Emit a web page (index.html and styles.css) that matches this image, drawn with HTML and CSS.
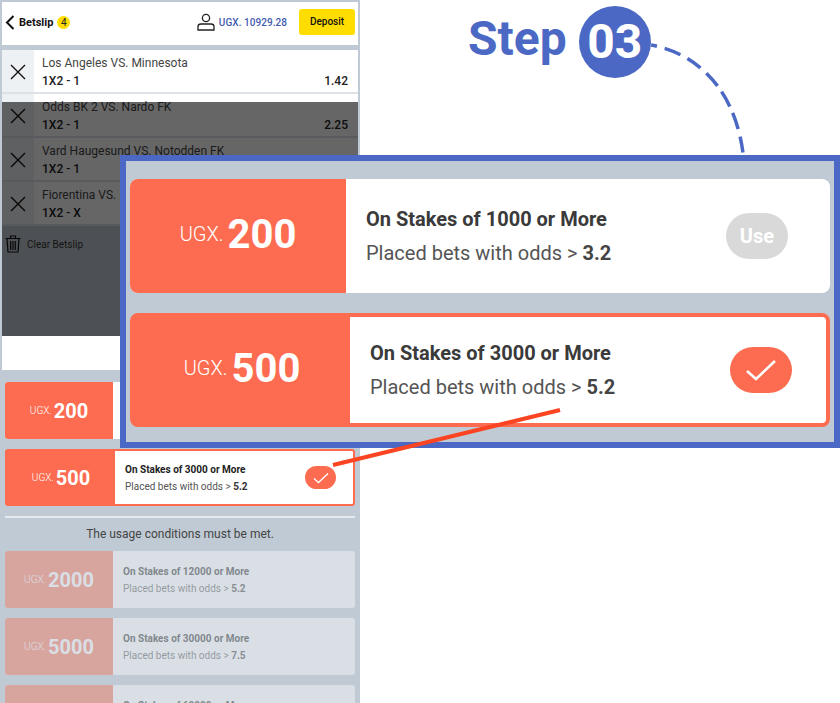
FILE: index.html
```html
<!DOCTYPE html>
<html lang="en">
<head>
  <meta charset="UTF-8">
  <title>Step 03 - Betslip coupons</title>
  <link rel="stylesheet" href="styles.css">
</head>
<body>
  <div class="stage">

    <div class="phone">
      <div class="topbar">
        <svg class="back" width="10" height="15" viewBox="0 0 10 15"><path d="M8.5 1 L2 7.5 L8.5 14" fill="none" stroke="#111" stroke-width="2"/></svg>
        <span class="topbar-title">Betslip</span>
        <span class="count">4</span>
        <svg class="user" width="18" height="18" viewBox="0 0 18 18"><circle cx="9" cy="5" r="3.6" fill="none" stroke="#222" stroke-width="1.3"/><path d="M1 17 V13.5 Q1 11 4 11 H14 Q17 11 17 13.5 V17 Z" fill="none" stroke="#222" stroke-width="1.3"/></svg>
        <span class="balance">UGX. 10929.28</span>
        <span class="deposit">Deposit</span>
      </div>

      <div class="slip">
        <div class="bet">
          <div class="bet-del"><svg width="16" height="16" viewBox="0 0 16 16"><path d="M1 1 L15 15 M15 1 L1 15" stroke="#111" stroke-width="1.4"/></svg></div>
          <div class="bet-info">
            <div class="bet-match">Los Angeles VS. Minnesota</div>
            <div class="bet-pick"><span>1X2 - 1</span><span>1.42</span></div>
          </div>
        </div>
        <div class="bet">
          <div class="bet-del"><svg width="16" height="16" viewBox="0 0 16 16"><path d="M1 1 L15 15 M15 1 L1 15" stroke="#111" stroke-width="1.4"/></svg></div>
          <div class="bet-info">
            <div class="bet-match">Odds BK 2 VS. Nardo FK</div>
            <div class="bet-pick"><span>1X2 - 1</span><span>2.25</span></div>
          </div>
        </div>
        <div class="bet">
          <div class="bet-del"><svg width="16" height="16" viewBox="0 0 16 16"><path d="M1 1 L15 15 M15 1 L1 15" stroke="#111" stroke-width="1.4"/></svg></div>
          <div class="bet-info">
            <div class="bet-match">Vard Haugesund VS. Notodden FK</div>
            <div class="bet-pick"><span>1X2 - 1</span><span>1.42</span></div>
          </div>
        </div>
        <div class="bet">
          <div class="bet-del"><svg width="16" height="16" viewBox="0 0 16 16"><path d="M1 1 L15 15 M15 1 L1 15" stroke="#111" stroke-width="1.4"/></svg></div>
          <div class="bet-info">
            <div class="bet-match">Fiorentina VS. Inter</div>
            <div class="bet-pick"><span>1X2 - X</span><span>1.42</span></div>
          </div>
        </div>
        <div class="clear">
          <svg width="16" height="18" viewBox="0 0 16 18"><path d="M0.5 3.5 H15.5 M5.5 3.5 V1 H10.5 V3.5 M2 3.5 L3 17 H13 L14 3.5 M5.7 6 V15 M8 6 V15 M10.3 6 V15" fill="none" stroke="#111" stroke-width="1.2"/></svg>
          <span>Clear Betslip</span>
        </div>
        <div class="dim"></div>
      </div>
      <div class="slip-foot"></div>

      <div class="coupons">
        <div class="coupon">
          <div class="coupon-value"><span class="cur">UGX.</span> <b>200</b></div>
          <div class="coupon-body"></div>
        </div>
        <div class="coupon coupon-picked">
          <div class="coupon-value"><span class="cur">UGX.</span> <b>500</b></div>
          <div class="coupon-body">
            <div class="coupon-text">
              <div class="coupon-title">On Stakes of 3000 or More</div>
              <div class="coupon-sub">Placed bets with odds &gt; <b>5.2</b></div>
            </div>
            <span class="tick"><svg width="16" height="12" viewBox="0 0 32 24"><path d="M2 13 L11 21 L30 3" fill="none" stroke="#fff" stroke-width="2.6"/></svg></span>
          </div>
        </div>
        <div class="rule"></div>
        <div class="notice">The usage conditions must be met.</div>
        <div class="coupon coupon-off">
          <div class="coupon-value"><span class="cur">UGX.</span> <b>2000</b></div>
          <div class="coupon-body">
            <div class="coupon-text">
              <div class="coupon-title">On Stakes of 12000 or More</div>
              <div class="coupon-sub">Placed bets with odds &gt; <b>5.2</b></div>
            </div>
          </div>
        </div>
        <div class="coupon coupon-off">
          <div class="coupon-value"><span class="cur">UGX.</span> <b>5000</b></div>
          <div class="coupon-body">
            <div class="coupon-text">
              <div class="coupon-title">On Stakes of 30000 or More</div>
              <div class="coupon-sub">Placed bets with odds &gt; <b>7.5</b></div>
            </div>
          </div>
        </div>
        <div class="coupon coupon-off">
          <div class="coupon-value"><span class="cur">UGX.</span> <b>10000</b></div>
          <div class="coupon-body">
            <div class="coupon-text">
              <div class="coupon-title">On Stakes of 60000 or More</div>
              <div class="coupon-sub">Placed bets with odds &gt; <b>7.5</b></div>
            </div>
          </div>
        </div>
      </div>
    </div>

    <!-- Callout: enlarged copy of the coupons -->
    <div class="callout">
      <div class="coupon">
        <div class="coupon-value"><span class="cur">UGX.</span> <b>200</b></div>
        <div class="coupon-body">
          <div class="coupon-text">
            <div class="coupon-title">On Stakes of 1000 or More</div>
            <div class="coupon-sub">Placed bets with odds &gt; <b>3.2</b></div>
          </div>
          <span class="use">Use</span>
        </div>
      </div>
      <div class="coupon coupon-picked">
        <div class="coupon-value"><span class="cur">UGX.</span> <b>500</b></div>
        <div class="coupon-body">
          <div class="coupon-text">
            <div class="coupon-title">On Stakes of 3000 or More</div>
            <div class="coupon-sub">Placed bets with odds &gt; <b>5.2</b></div>
          </div>
          <span class="tick"><svg width="32" height="24" viewBox="0 0 32 24"><path d="M2 13 L11 21 L30 3" fill="none" stroke="#fff" stroke-width="2.6"/></svg></span>
        </div>
      </div>
    </div>

    <div class="step">
      <span class="step-word">Step</span>
      <span class="step-num">03</span>
    </div>

    <!-- Dashed curve and red pointer -->
    <svg class="marks" width="840" height="703" viewBox="0 0 840 703">
      <path d="M651 45 C 700 54, 735 92, 743 153" fill="none" stroke="#4b69c4" stroke-width="3.5" stroke-dasharray="6 8 17 8 16 8 17 7 17 7 17 8 16 9"/>
      <path d="M333 465 L560 410" fill="none" stroke="#fb4422" stroke-width="4"/>
    </svg>

  </div>
</body>
</html>
```

FILE: styles.css
```css
body {
  margin: 0;
  background: #fff;
  font-family: Roboto, Arial, sans-serif;
  color: #333;
}

.stage {
  position: relative;
  width: 840px;
  height: 703px;
  overflow: hidden;
}

/* Phone */
.phone {
  box-sizing: border-box;
  width: 360px;
  height: 703px;
  padding: 2px 2px 0;
  background: #c0cad4;
  overflow: hidden;
}

.topbar {
  display: flex;
  align-items: center;
  height: 43px;
  margin-bottom: 5px;
  padding: 0 3px 3px 3px;
  box-sizing: border-box;
  background: #fff;
}

.back {
  margin-right: 4px;
}

.topbar-title {
  font-size: 11px;
  font-weight: 700;
  color: #111;
}

.count {
  width: 13px;
  height: 13px;
  margin-left: 4px;
  border-radius: 50%;
  background: #ffdd00;
  font-size: 10px;
  line-height: 13px;
  text-align: center;
  color: #222;
}

.user {
  margin-left: auto;
  margin-right: 4px;
}

.balance {
  font-size: 10px;
  font-weight: 500;
  letter-spacing: 0.05px;
  color: #3f5bb0;
}

.deposit {
  width: 56px;
  height: 26px;
  margin-left: 12px;
  border-radius: 3px;
  background: #ffdd00;
  font-size: 10px;
  font-weight: 500;
  line-height: 26px;
  text-align: center;
  color: #111;
}

.slip {
  position: relative;
  height: 286px;
}

.bet {
  display: flex;
  box-sizing: border-box;
  height: 44px;
  border-bottom: 2px solid #dde2e8;
  background: #fff;
}

.bet-del {
  display: flex;
  align-items: center;
  justify-content: center;
  box-sizing: border-box;
  width: 32px;
  padding-top: 2px;
  background: #eef1f4;
}

.bet-info {
  flex: 1;
  padding: 5px 10px 0 8px;
}

.bet-match {
  font-size: 12px;
  line-height: 17px;
  color: #444;
}

.bet-pick {
  display: flex;
  justify-content: space-between;
  margin-top: 1px;
  font-size: 12px;
  font-weight: 500;
  line-height: 17px;
  color: #222;
}

.clear {
  display: flex;
  align-items: center;
  gap: 6px;
  padding: 9px 0 0 3px;
  font-size: 10px;
  color: #333;
}

.dim {
  position: absolute;
  top: 52px;
  left: 0;
  right: 0;
  bottom: 0;
  background: rgba(0, 0, 0, 0.6);
}

.slip-foot {
  height: 34px;
  background: #fff;
}

.coupons {
  display: flex;
  flex-direction: column;
  gap: 10px;
  padding: 12px 3px 0;
}

/* Coupon, small size */
.coupon {
  display: flex;
  flex: none;
  box-sizing: border-box;
  height: 57px;
  border-radius: 3px;
  background: #fff;
  overflow: hidden;
}

.coupon-value {
  display: flex;
  align-items: center;
  justify-content: center;
  flex: none;
  gap: 2px;
  width: 108px;
  background: #fd6c50;
  color: #fff;
}

.cur {
  font-size: 10px;
  font-weight: 300;
}

.coupon-value b {
  font-size: 20px;
  font-weight: 700;
}

.coupon-body {
  display: flex;
  flex: 1;
  align-items: center;
  justify-content: space-between;
  padding: 0 17px 0 10px;
}

.coupon-title {
  font-size: 10px;
  font-weight: 700;
  line-height: 13px;
  color: #222;
}

.coupon-sub {
  margin-top: 4px;
  font-size: 10px;
  line-height: 13px;
  color: #555;
}

.coupon-sub b {
  font-weight: 700;
  color: #333;
}

.coupon-picked {
  border: 2px solid #fd6c50;
  background: #fd6c50;
}

.coupon-picked .coupon-body {
  background: #fff;
}

.tick {
  display: flex;
  align-items: center;
  justify-content: center;
  width: 31px;
  height: 23px;
  border-radius: 12px;
  background: #fd6c50;
}

.coupon-off {
  opacity: 0.4;
}

.rule {
  height: 2px;
  background: #e6eaee;
}

.notice {
  margin-top: -2px;
  margin-bottom: -1px;
  font-size: 12px;
  line-height: 16px;
  text-align: center;
  color: #444;
}

/* Callout, twice the size */
.callout {
  position: absolute;
  left: 120px;
  top: 155px;
  box-sizing: border-box;
  display: flex;
  flex-direction: column;
  gap: 20px;
  width: 720px;
  height: 293px;
  padding: 18px 4px 0;
  border: 6px solid #4b69c4;
  background: #c0cad4;
}

.callout .coupon {
  height: 114px;
  border-radius: 8px;
}

.callout .coupon-value {
  width: 216px;
  gap: 4px;
  padding-bottom: 4px;
  box-sizing: border-box;
}

.callout .coupon-picked {
  border-width: 4px;
}

.callout .cur {
  font-size: 20px;
}

.callout .coupon-value b {
  font-size: 40px;
}

.callout .coupon-body {
  padding: 0 42px 0 20px;
}

.callout .coupon-picked .coupon-body {
  padding-right: 34px;
}

.callout .coupon-title {
  font-size: 20px;
  line-height: 26px;
  color: #3a3a3a;
}

.callout .coupon-sub {
  margin-top: 8px;
  font-size: 20px;
  line-height: 26px;
}

.callout .coupon-sub b {
  color: #444;
}

.callout .tick {
  width: 62px;
  height: 46px;
  border-radius: 23px;
}

.use {
  width: 62px;
  height: 46px;
  border-radius: 23px;
  background: #d9d9d9;
  font-size: 20px;
  font-weight: 700;
  line-height: 46px;
  text-align: center;
  color: #fff;
}

/* Step heading */
.step {
  position: absolute;
  left: 468px;
  top: 6px;
  display: flex;
  align-items: center;
  gap: 12px;
  font-size: 48px;
  font-weight: 700;
  color: #4b69c4;
}

.step-word {
  margin-bottom: 8px;
}

.step-num {
  width: 72px;
  height: 72px;
  border-radius: 50%;
  background: #4b69c4;
  line-height: 72px;
  text-align: center;
  color: #fff;
}

.marks {
  position: absolute;
  left: 0;
  top: 0;
}
```
